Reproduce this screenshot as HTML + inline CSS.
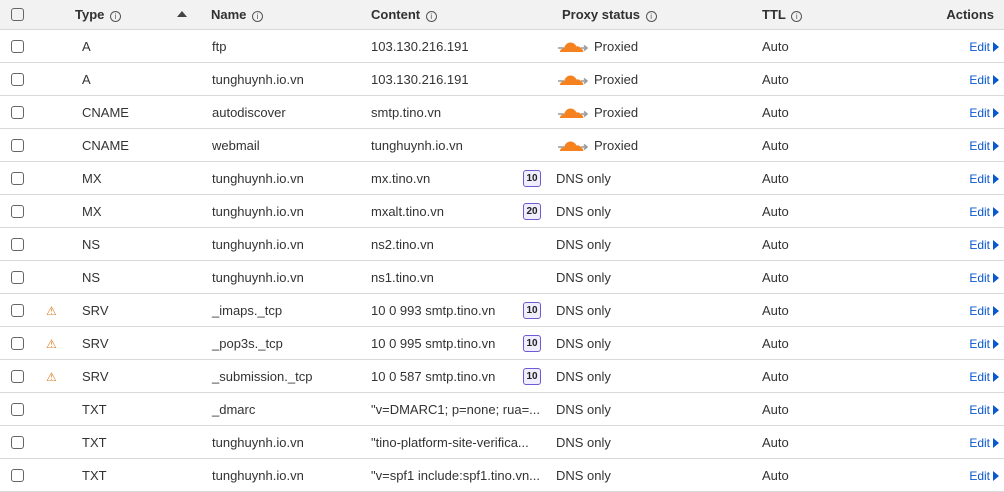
<!DOCTYPE html>
<html><head><meta charset="utf-8"><style>
body{margin:0;width:1004px;height:490px;overflow:hidden;background:#fff;font-family:"Liberation Sans",Arial,sans-serif;font-size:13px;color:#333}
.hdr{position:absolute;left:0;top:0;width:1004px;height:29px;background:#f2f2f2;border-bottom:1px solid #d9d9d9}
.row{position:absolute;left:0;width:1004px;height:32px;border-bottom:1px solid #d9d9d9}
.c{position:absolute;top:1px;line-height:32px;white-space:nowrap}
.hdr .c{line-height:29px;font-weight:bold;color:#313131;top:0}
.cb{position:absolute;left:11px;width:11px;height:11px;border:1px solid #666;border-radius:3px;top:10px}
.hdr .cb{top:8px}
.i{display:inline-block;width:9px;height:9px;border:1px solid #555;border-radius:50%;font-weight:normal;font-size:8px;line-height:9px;text-align:center;color:#555;vertical-align:0px;margin-left:2px}
.badge{position:absolute;left:523px;top:8px;width:16px;height:15px;border:1px solid #6b5cd6;border-radius:3px;background:#f0eefc;font-size:10px;font-weight:bold;line-height:15px;text-align:center;color:#222}
.edit{position:absolute;right:5px;top:1px;line-height:32px;color:#0a57d0;font-size:12px}
.edit:after{content:"";display:inline-block;margin-left:3px;border-left:6px solid #0a57d0;border-top:5.5px solid transparent;border-bottom:5.5px solid transparent;vertical-align:-1px}
.warn{position:absolute;left:46px;top:10px;color:#e07b20;font-size:12px}
</style></head><body>
<div class="hdr">
<div class="cb"></div>
<div class="c" style="left:75px">Type <span class="i">i</span></div>
<div style="position:absolute;left:177px;top:11px;border-bottom:6px solid #444;border-left:5px solid transparent;border-right:5px solid transparent"></div>
<div class="c" style="left:211px">Name <span class="i">i</span></div>
<div class="c" style="left:371px">Content <span class="i">i</span></div>
<div class="c" style="left:562px">Proxy status <span class="i">i</span></div>
<div class="c" style="left:762px">TTL <span class="i">i</span></div>
<div class="c" style="right:10px">Actions</div>
</div>
<div id="rows"></div>
<script>
var R=[["A","ftp","103.130.216.191","",1,0],["A","tunghuynh.io.vn","103.130.216.191","",1,0],["CNAME","autodiscover","smtp.tino.vn","",1,0],["CNAME","webmail","tunghuynh.io.vn","",1,0],["MX","tunghuynh.io.vn","mx.tino.vn","10",0,0],["MX","tunghuynh.io.vn","mxalt.tino.vn","20",0,0],["NS","tunghuynh.io.vn","ns2.tino.vn","",0,0],["NS","tunghuynh.io.vn","ns1.tino.vn","",0,0],["SRV","_imaps._tcp","10 0 993 smtp.tino.vn","10",0,1],["SRV","_pop3s._tcp","10 0 995 smtp.tino.vn","10",0,1],["SRV","_submission._tcp","10 0 587 smtp.tino.vn","10",0,1],["TXT","_dmarc","\"v=DMARC1; p=none; rua=...","",0,0],["TXT","tunghuynh.io.vn","\"tino-platform-site-verifica...","",0,0],["TXT","tunghuynh.io.vn","\"v=spf1 include:spf1.tino.vn...","",0,0]];
var cloud='<svg style="position:absolute;left:557px;top:9px" width="32" height="14" viewBox="0 0 32 14"><path d="M1 9h6M24 9h6M27 6.5l3 2.5-3 2.5" stroke="#999" stroke-width="1.5" fill="none"/><path d="M3 13c0-2.5 2-3.5 4-3.5 1-4 3.5-6 6.5-6 3 0 5 2 6 4 1.5-.5 4 0 5 2.5 1 .2 1.8 1.2 1.8 3z" fill="#f6821f"/></svg>';
var h='';R.forEach(function(r,k){var t=30+33*k;
h+='<div class="row" style="top:'+t+'px"><div class="cb"></div>'+(r[5]?'<div class="warn">⚠</div>':'')+
'<div class="c" style="left:82px">'+r[0]+'</div><div class="c" style="left:212px">'+r[1]+'</div><div class="c" style="left:371px">'+r[2]+'</div>'+
(r[3]?'<div class="badge">'+r[3]+'</div>':'')+
(r[4]?cloud+'<div class="c" style="left:594px">Proxied</div>':'<div class="c" style="left:556px">DNS only</div>')+
'<div class="c" style="left:762px">Auto</div><div class="edit">Edit</div></div>';});
document.getElementById('rows').innerHTML=h;
</script>
</body></html>
